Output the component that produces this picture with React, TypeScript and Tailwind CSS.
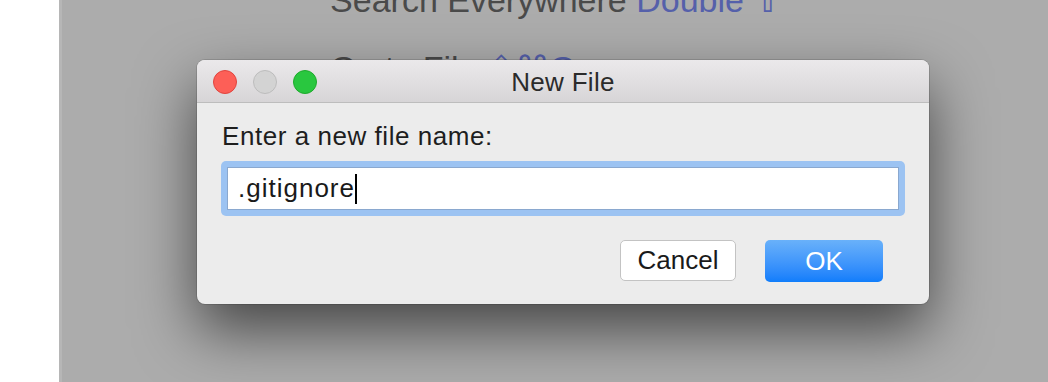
import React from "react";

export default function App() {
  const font = { fontFamily: '"Liberation Sans", "DejaVu Sans", Arial, sans-serif' };
  return (
    <div className="flex w-[1048px] h-[382px] overflow-hidden bg-white" style={font}>
      <div className="w-[59px] shrink-0 bg-white" />
      <div className="relative flex-1 bg-[#acacac] border-l-[3px] border-[#b6b6b6] overflow-hidden">
        {/* background hints */}
        <div className="flex justify-center mt-[-34px] pl-[2px]">
          <div className="text-[34px] leading-[68px] text-[#4a4a4a]">
            <div>
              Search Everywhere <span className="text-[#5560aa]">Double ⇧</span>
            </div>
            <div>
              Go to File <span className="text-[#5560aa]">⇧⌘O</span>
            </div>
          </div>
        </div>

        {/* dialog */}
        <div className="absolute left-[135px] top-[60px] w-[732px] h-[244px] rounded-[8px] bg-[#ececec] overflow-hidden shadow-[0_26px_60px_rgba(0,0,0,0.6),0_0_0_1px_rgba(0,0,0,0.12)]">
          <div className="relative flex items-center justify-center h-[43px] border-b border-[#bdbdbd] bg-gradient-to-b from-[#ebe9eb] to-[#d7d5d7]">
            <div className="absolute left-[16px] top-[10px] flex gap-[16px]">
              <div className="w-[24px] h-[24px] rounded-full bg-[#fd5f57] border border-[#e0443e]" />
              <div className="w-[24px] h-[24px] rounded-full bg-[#d3d3d3] border border-[#bcbcbc]" />
              <div className="w-[24px] h-[24px] rounded-full bg-[#29c73f] border border-[#1eaa2c]" />
            </div>
            <span className="mt-[3px] text-[26px] text-[#2b2b2b] tracking-[0.3px]">New File</span>
          </div>
          <div className="px-[24px] pt-[18px]">
            <div className="pl-[1px] text-[26px] leading-[30px] text-[#1e1e1e] tracking-[0.55px]">
              Enter a new file name:
            </div>
            <div className="mt-[10px] rounded-[5px] bg-[#9cc3f2] p-[6px]">
              <div className="flex items-center h-[43px] bg-white border border-[#8aa8cf] pl-[10px] text-[26px] leading-[43px] text-[#1a1a1a] tracking-[1px]">
                <span>.gitignore</span>
                <span className="w-[2px] h-[30px] bg-black" />
              </div>
            </div>
            <div className="flex justify-end gap-[29px] mt-[24px] pr-[22px]">
              <div className="flex items-center justify-center w-[116px] h-[41px] rounded-[5px] bg-white border border-[#c3c3c3] text-[26px] text-[#1a1a1a]">
                Cancel
              </div>
              <div className="flex items-center justify-center w-[118px] h-[42px] rounded-[5px] bg-gradient-to-b from-[#69b1fa] to-[#0f7dfb] text-[26px] text-white">
                OK
              </div>
            </div>
          </div>
        </div>
      </div>
    </div>
  );
}
